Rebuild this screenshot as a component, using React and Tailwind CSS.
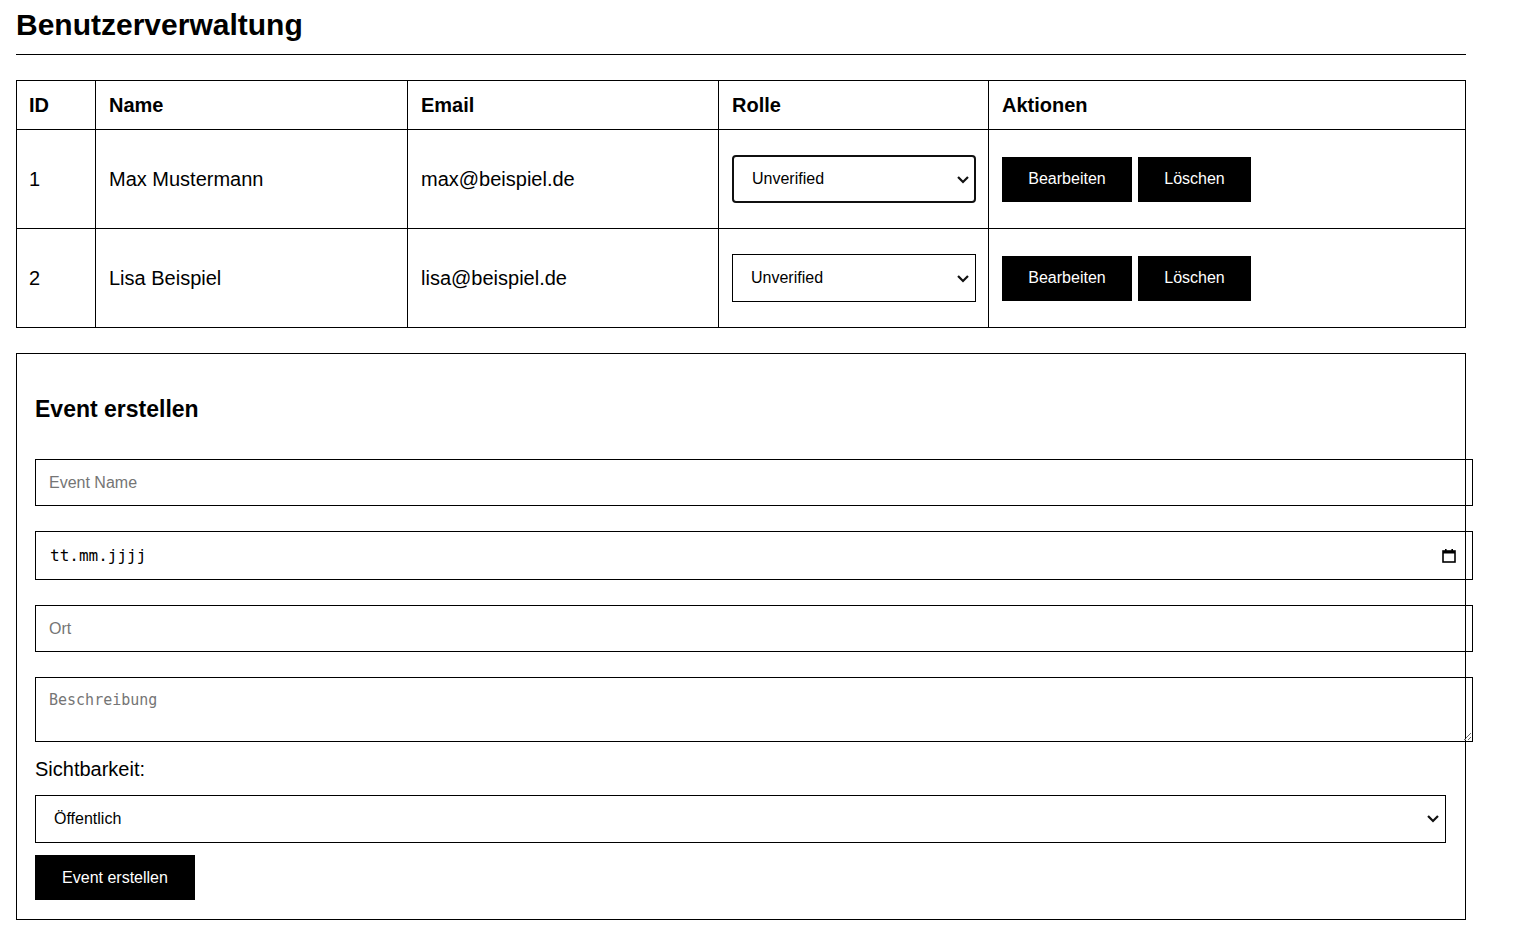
import React from "react";

function Chevron({ className }) {
  return (
    <svg
      className={className}
      width="12"
      height="8"
      viewBox="0 0 12 8"
      fill="none"
      stroke="#111"
      strokeWidth="2.2"
      strokeLinecap="square"
    >
      <path d="M1.8 1.8 L6 6 L10.2 1.8" />
    </svg>
  );
}

function RoleSelect({ focused }) {
  return (
    <div className="relative w-[244px] h-[48px]">
      <select
        defaultValue="Unverified"
        className={
          "appearance-none w-full h-full bg-white text-[16px] text-black pl-[18px] pr-8 outline-none " +
          (focused
            ? "border-2 border-[#101010] rounded-[4px] pl-[17px]"
            : "border border-black")
        }
      >
        <option>Unverified</option>
        <option>User</option>
        <option>Admin</option>
      </select>
      <Chevron className="pointer-events-none absolute right-[7px] top-[21px]" />
    </div>
  );
}

function Row({ id, name, email, focused }) {
  return (
    <tr>
      <td className="border border-black h-[99px] px-3 text-[20px] align-middle">{id}</td>
      <td className="border border-black pl-[13px] pr-3 text-[20px] align-middle">{name}</td>
      <td className="border border-black pl-[13px] pr-3 text-[20px] align-middle">{email}</td>
      <td className="border border-black pl-[13px] pr-3 align-middle">
        <RoleSelect focused={focused} />
      </td>
      <td className="border border-black pl-[13px] pr-3 align-middle">
        <div className="flex gap-[6px]">
          <button className="bg-black text-white text-[16px] h-[45px] w-[130px]">
            Bearbeiten
          </button>
          <button className="bg-black text-white text-[16px] h-[45px] w-[113px]">
            Löschen
          </button>
        </div>
      </td>
    </tr>
  );
}

export default function App() {
  return (
    <div
      className="bg-white text-black min-h-[951px] pl-4 pt-[8px] pb-8"
      style={{ fontFamily: '"Liberation Sans", Arial, sans-serif' }}
    >
      <div className="w-[1450px]">
        <h1 className="text-[30px] font-bold leading-[34px] pb-[12px] border-b border-black">
          Benutzerverwaltung
        </h1>

        <table className="mt-[25px] w-[1449px] table-fixed border-collapse">
          <colgroup>
            <col className="w-[79px]" />
            <col className="w-[312px]" />
            <col className="w-[311px]" />
            <col className="w-[270px]" />
            <col className="w-[477px]" />
          </colgroup>
          <thead>
            <tr>
              <th className="border border-black h-[49px] px-3 text-left text-[20px] font-bold">ID</th>
              <th className="border border-black pl-[13px] pr-3 text-left text-[20px] font-bold">Name</th>
              <th className="border border-black pl-[13px] pr-3 text-left text-[20px] font-bold">Email</th>
              <th className="border border-black pl-[13px] pr-3 text-left text-[20px] font-bold">Rolle</th>
              <th className="border border-black pl-[13px] pr-3 text-left text-[20px] font-bold">Aktionen</th>
            </tr>
          </thead>
          <tbody>
            <Row id="1" name="Max Mustermann" email="max@beispiel.de" focused />
            <Row id="2" name="Lisa Beispiel" email="lisa@beispiel.de" />
          </tbody>
        </table>

        <div className="mt-[25px] border border-black w-[1450px] pl-[18px] pt-[19px] pb-[19px]">
          <h2 className="mt-[23px] text-[23px] font-bold leading-[26px]">Event erstellen</h2>

          <input
            placeholder="Event Name"
            className="mt-[37px] block w-[1438px] h-[47px] border border-black px-[13px] text-[16px] placeholder:text-[#757575] outline-none"
          />

          <div className="mt-[25px] flex items-center justify-between w-[1438px] h-[49px] border border-black pl-[14px] pr-[16px]">
            <span
              className="text-[16px] text-black"
              style={{ fontFamily: '"DejaVu Sans Mono", "Liberation Mono", monospace' }}
            >
              tt.mm.jjjj
            </span>
            <svg width="14" height="15" viewBox="0 0 14 15" fill="none">
              <rect x="1" y="3" width="12" height="11" stroke="#000" strokeWidth="1.6" />
              <rect x="1" y="3" width="12" height="2.5" fill="#000" />
              <rect x="3" y="1" width="1.6" height="3" fill="#000" />
              <rect x="9.4" y="1" width="1.6" height="3" fill="#000" />
            </svg>
          </div>

          <input
            placeholder="Ort"
            className="mt-[25px] block w-[1438px] h-[47px] border border-black px-[13px] text-[16px] placeholder:text-[#757575] outline-none"
          />

          <textarea
            placeholder="Beschreibung"
            className="mt-[25px] block w-[1438px] h-[65px] border border-black px-[13px] py-[11px] text-[15px] placeholder:text-[#757575] outline-none"
            style={{ fontFamily: '"DejaVu Sans Mono", "Liberation Mono", monospace' }}
          />

          <label className="block mt-[16px] text-[20px] leading-[23px]">Sichtbarkeit:</label>

          <div className="relative mt-[14px] w-[1411px] h-[48px]">
            <select
              defaultValue="Öffentlich"
              className="appearance-none w-full h-full bg-white border border-black pl-[18px] pr-8 text-[16px] text-black outline-none"
            >
              <option>Öffentlich</option>
              <option>Privat</option>
            </select>
            <Chevron className="pointer-events-none absolute right-[7px] top-[20px]" />
          </div>

          <button className="mt-[12px] block bg-black text-white text-[16px] h-[45px] w-[160px]">
            Event erstellen
          </button>
        </div>
      </div>
    </div>
  );
}
